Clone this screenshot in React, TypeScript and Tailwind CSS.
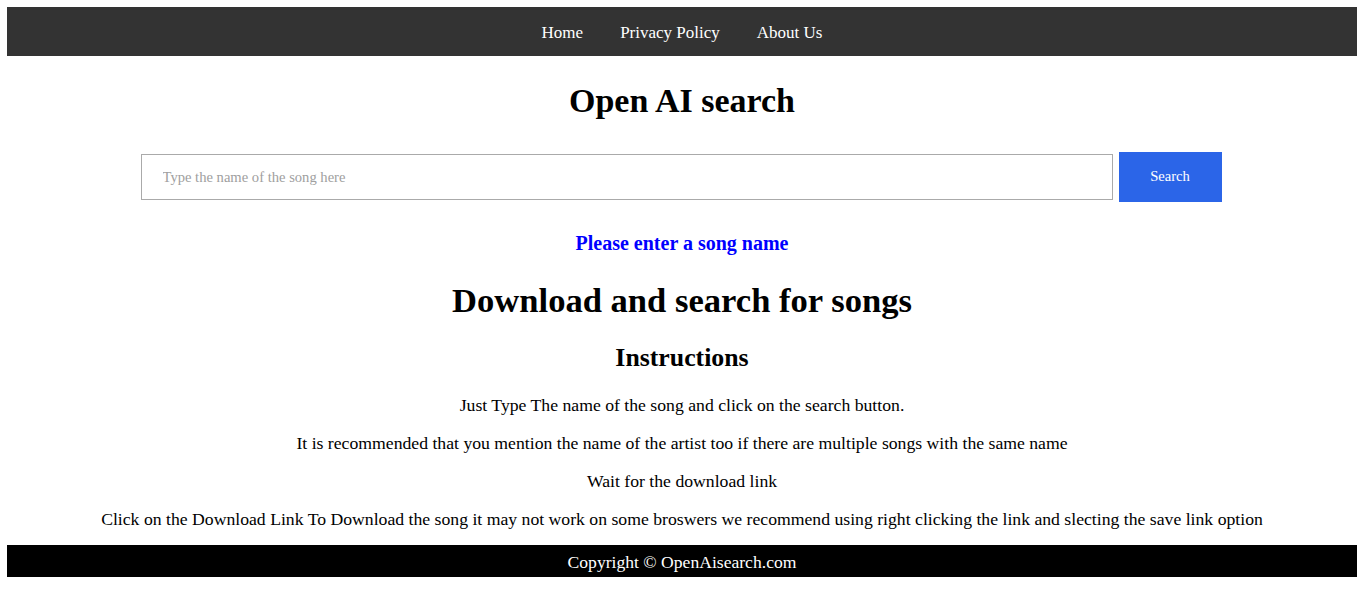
import React from "react";

const serif = "font-['Liberation_Serif','Times_New_Roman',serif]";

export default function App() {
  return (
    <div className={`bg-white min-h-screen p-[7px] text-black ${serif}`}>
      {/* top nav */}
      <nav className="bg-[#333333] h-[49px] flex items-center justify-center gap-[37px] pt-[2px] text-white text-[17px]">
        <a href="#" className="leading-none">Home</a>
        <a href="#" className="leading-none">Privacy Policy</a>
        <a href="#" className="leading-none">About Us</a>
      </nav>

      <h1 className="mt-[25px] text-center text-[34px] font-bold leading-[40px]">Open AI search</h1>

      <div className="mt-[31px] flex items-center justify-center gap-[6px] pr-[2px]">
        <input
          type="text"
          placeholder="Type the name of the song here"
          className={`w-[972px] h-[46px] border border-[#aaaaaa] px-[21px] text-[14.6px] outline-none placeholder:text-[#a0a0a0] ${serif}`}
        />
        <button className={`w-[103px] h-[50px] bg-[#2b65e8] text-white text-[14.6px] ${serif}`}>Search</button>
      </div>

      <p className="mt-[29px] text-center text-[20px] font-bold text-[#0000ff] leading-[24px]">Please enter a song name</p>

      <h2 className="mt-[25px] text-center text-[34.6px] font-bold leading-[40px]">Download and search for songs</h2>

      <h3 className="mt-[22px] text-center text-[25.8px] font-bold leading-[32px]">Instructions</h3>

      <div className="mt-[19px] flex flex-col gap-[14px] text-center text-[17.7px] leading-[24px]">
        <p>Just Type The name of the song and click on the search button.</p>
        <p>It is recommended that you mention the name of the artist too if there are multiple songs with the same name</p>
        <p>Wait for the download link</p>
        <p>Click on the Download Link To Download the song it may not work on some broswers we recommend using right clicking the link and slecting the save link option</p>
      </div>

      <footer className="mt-[14px] bg-black h-[32px] flex items-center justify-center pt-[2px] text-white text-[17.6px]">
        Copyright © OpenAisearch.com
      </footer>
    </div>
  );
}
